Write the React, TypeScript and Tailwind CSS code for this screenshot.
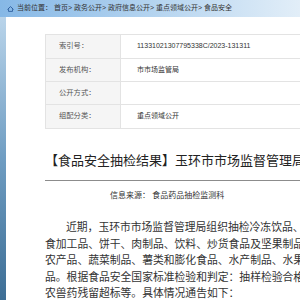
const rows = [
  { label: "索引号：", value: "11331021307795338C/2023-131311" },
  { label: "发布机构：", value: "市市场监管局" },
  { label: "公开方式：", value: "" },
  { label: "组配分类：", value: "重点领域公开" },
]

const lines = [
  "近期，玉环市市场监督管理局组织抽检冷冻饮品、速冻",
  "食加工品、饼干、肉制品、饮料、炒货食品及坚果制品",
  "农产品、蔬菜制品、薯类和膨化食品、水产制品、水果",
  "品。根据食品安全国家标准检验和判定：抽样检验合格",
  "农兽药残留超标等。具体情况通告如下：",
]

function HomeIcon() {
  return (
    <svg width="7" height="6" viewBox="0 0 7 6" className="mr-[3px]">
      <path d="M0.5 3.5 L3.5 0.6 L6.5 3.5" fill="none" stroke="#2f5f9e" strokeWidth="1" />
      <path d="M1.5 3.2 V5.4 H5.5 V3.2" fill="none" stroke="#2f5f9e" strokeWidth="0.9" />
    </svg>
  )
}

export default function App() {
  return (
    <div className="relative h-[300px] w-[300px] overflow-hidden bg-white font-['Liberation_Sans','Noto_Sans_CJK_SC',sans-serif]">
      <div className="flex h-[17px] items-center bg-gradient-to-r from-[#86b8e6] via-[#b3d3ef] to-[#e2eef8] pl-[7px] text-[7px] text-[#333]">
        <HomeIcon />
        <span className="whitespace-nowrap">当前位置： 首页&gt; 政务公开&gt; 政府信息公开&gt; 重点领域公开&gt; 食品安全</span>
      </div>
      <div className="flex h-[283px]">
        <div className="w-[6px] shrink-0 bg-gradient-to-b from-[#b9d4ea] via-[#6f9dc2] to-[#3d6e95]" />
        <div className="min-w-0 flex-1 bg-white pl-[39px] pt-[17px]">
          <div className="w-[420px]">
            <div className="border-t border-[#e3e3e3]">
              {rows.map((r, i) => (
                <div key={r.label} className={`flex border-b border-l border-[#e3e3e3] ${i === 0 || i === 3 ? "h-[24px]" : "h-[23px]"}`}>
                  <div className="flex w-[75px] shrink-0 items-center border-r border-[#e3e3e3] bg-[#f5f5f5] pl-[13px] text-[7.3px] text-[#555]">
                    {r.label}
                  </div>
                  <div className="flex flex-1 items-center pl-[16px] text-[7px] text-[#333]">{r.value}</div>
                </div>
              ))}
            </div>
            <div className="mt-[22px] whitespace-nowrap pb-[9px] text-[13px] leading-[20px] text-[#222]">
              【食品安全抽检结果】玉环市市场监督管理局
            </div>
            <div className="h-px bg-[#8c8c8c]" />
            <div className="mt-[9px] pl-[65px] text-[8px] leading-[12px] text-[#333]">信息来源： 食品药品抽检监测科</div>
            <div className="mt-[17px] font-['Liberation_Serif','Noto_Sans_CJK_SC',serif] text-[10.8px] leading-[16.5px] text-[#333]">
              {lines.map((l, i) => (
                <div key={i} className={`whitespace-nowrap ${i === 0 ? "pl-[21px]" : ""}`}>
                  {l}
                </div>
              ))}
            </div>
          </div>
        </div>
      </div>
    </div>
  )
}
